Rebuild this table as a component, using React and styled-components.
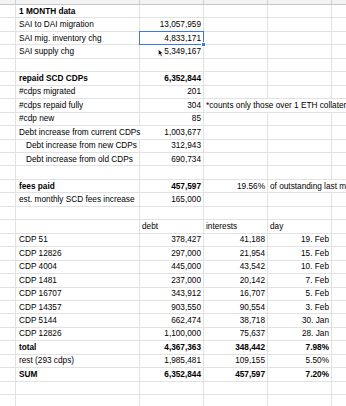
import React from "react";
import styled, { createGlobalStyle, css } from "styled-components";

const GlobalStyle = createGlobalStyle`
  html, body {
    margin: 0;
    padding: 0;
    background: #fff;
    overflow: hidden;
  }
  body {
    font-family: "Liberation Sans", Arial, Helvetica, sans-serif;
    color: #000;
  }
`;

const COLS = "16px 124px 64px 64px 64px 1fr";

const rows = [
  { b: "1 MONTH data", bold: true },
  { b: "SAI to DAI migration", c: "13,057,959" },
  { b: "SAI mig. inventory chg", c: "4,833,171", selected: true },
  { b: "SAI supply chg", c: "5,349,167", cursor: true },
  {},
  { b: "repaid SCD CDPs", c: "6,352,844", bold: true },
  { b: "#cdps migrated", c: "201" },
  { b: "#cdps repaid fully", c: "304", note: "*counts only those over 1 ETH collateral" },
  { b: "#cdp new", c: "85" },
  { b: "Debt increase from current CDPs", c: "1,003,677", spill: true },
  { b: "Debt increase from new CDPs", c: "312,943", indent: true },
  { b: "Debt increase from old CDPs", c: "690,734", indent: true },
  {},
  { b: "fees paid", c: "457,597", bold: true, plainD: true, d: "19.56%", tail: "of outstanding last month" },
  { b: "est. monthly SCD fees increase", c: "165,000" },
  {},
  { head: true, c: "debt", d: "interests", e: "day" },
  { b: "CDP 51", c: "378,427", d: "41,188", e: "19. Feb" },
  { b: "CDP 12826", c: "297,000", d: "21,954", e: "15. Feb" },
  { b: "CDP 4004", c: "445,000", d: "43,542", e: "10. Feb" },
  { b: "CDP 1481", c: "237,000", d: "20,142", e: "7. Feb" },
  { b: "CDP 16707", c: "343,912", d: "16,707", e: "5. Feb" },
  { b: "CDP 14357", c: "903,550", d: "90,554", e: "3. Feb" },
  { b: "CDP 5144", c: "662,474", d: "38,718", e: "30. Jan" },
  { b: "CDP 12826", c: "1,100,000", d: "75,637", e: "28. Jan" },
  { b: "total", c: "4,367,363", d: "348,442", e: "7.98%", bold: true },
  { b: "rest (293 cdps)", c: "1,985,481", d: "109,155", e: "5.50%" },
  { b: "SUM", c: "6,352,844", d: "457,597", e: "7.20%", bold: true },
  {},
  {},
];

const Sheet = styled.div`
  width: 346px;
  height: 406px;
  overflow: hidden;
  font-size: 8.25px;
  line-height: 1;
`;

const HeaderStrip = styled.div`
  display: grid;
  grid-template-columns: ${COLS};
  height: 5px;
  background: #f3f3f3;
  border-bottom: 1px solid #c7c7c7;
  box-sizing: border-box;
`;

const HeaderCell = styled.div`
  border-right: 1px solid #cfcfcf;
  &:last-child {
    border-right: none;
  }
`;

const Row = styled.div`
  display: grid;
  grid-template-columns: ${COLS};
  height: 13.46px;
  box-sizing: border-box;
  border-bottom: 1px solid #e2e2e2;
`;

const Cell = styled.div`
  position: relative;
  display: flex;
  align-items: flex-end;
  min-width: 0;
  white-space: nowrap;
  overflow: hidden;
  border-right: 1px solid #e2e2e2;
  padding: 0 2px 1.6px 3px;
  justify-content: ${(p) => (p.$right ? "flex-end" : "flex-start")};
  font-weight: ${(p) => (p.$bold ? 700 : 400)};
  ${(p) => p.$indent && css`padding-left: 10px;`}
  ${(p) => p.$span && css`grid-column: span ${p.$span};`}
  ${(p) => p.$open && css`overflow: visible;`}
  ${(p) =>
    p.$spill &&
    css`
      border-right-color: transparent;
      z-index: 1;
    `}
  ${(p) => p.$head && css`padding-left: 2px;`}
  &:last-child {
    border-right: none;
  }
`;

const Selection = styled.div`
  position: absolute;
  top: -1px;
  left: -1px;
  right: -1px;
  bottom: -1px;
  border: 1.5px solid #3b78e7;
  pointer-events: none;
  z-index: 2;

  &::after {
    content: "";
    position: absolute;
    right: -3px;
    bottom: -3px;
    width: 3px;
    height: 3px;
    background: #3b78e7;
    border: 1px solid #fff;
  }
`;

const Pointer = styled.svg`
  position: absolute;
  left: 18px;
  top: 4px;
  width: 5px;
  height: 8px;
`;

const CursorArrow = () => (
  <Pointer viewBox="0 0 10 16">
    <path d="M1 1 L1 13 L4 10 L6.5 15 L8.5 14 L6 9 L10 9 Z" fill="#000" stroke="#fff" strokeWidth="1" />
  </Pointer>
);

const SheetRow = ({ r }) => {
  const valueBold = r.bold;
  return (
    <Row>
      <Cell />
      <Cell $bold={r.bold} $indent={r.indent} $spill={r.spill} $open>
        {r.b}
      </Cell>
      <Cell $right={!r.head} $head={r.head} $bold={valueBold} $open={r.selected || r.cursor}>
        {r.c}
        {r.selected && <Selection />}
        {r.cursor && <CursorArrow />}
      </Cell>
      {r.note ? (
        <Cell $span={3} $head>
          {r.note}
        </Cell>
      ) : (
        <>
          <Cell $right={!r.head} $head={r.head} $bold={valueBold && !r.plainD}>
            {r.d}
          </Cell>
          {r.tail ? (
            <Cell $span={2} $head>
              {r.tail}
            </Cell>
          ) : (
            <>
              <Cell $right={!r.head} $head={r.head} $bold={valueBold}>
                {r.e}
              </Cell>
              <Cell />
            </>
          )}
        </>
      )}
    </Row>
  );
};

export default function App() {
  return (
    <>
      <GlobalStyle />
      <Sheet>
        <HeaderStrip>
          {Array.from({ length: 6 }).map((_, i) => (
            <HeaderCell key={i} />
          ))}
        </HeaderStrip>
        {rows.map((r, i) => (
          <SheetRow key={i} r={r} />
        ))}
      </Sheet>
    </>
  );
}
